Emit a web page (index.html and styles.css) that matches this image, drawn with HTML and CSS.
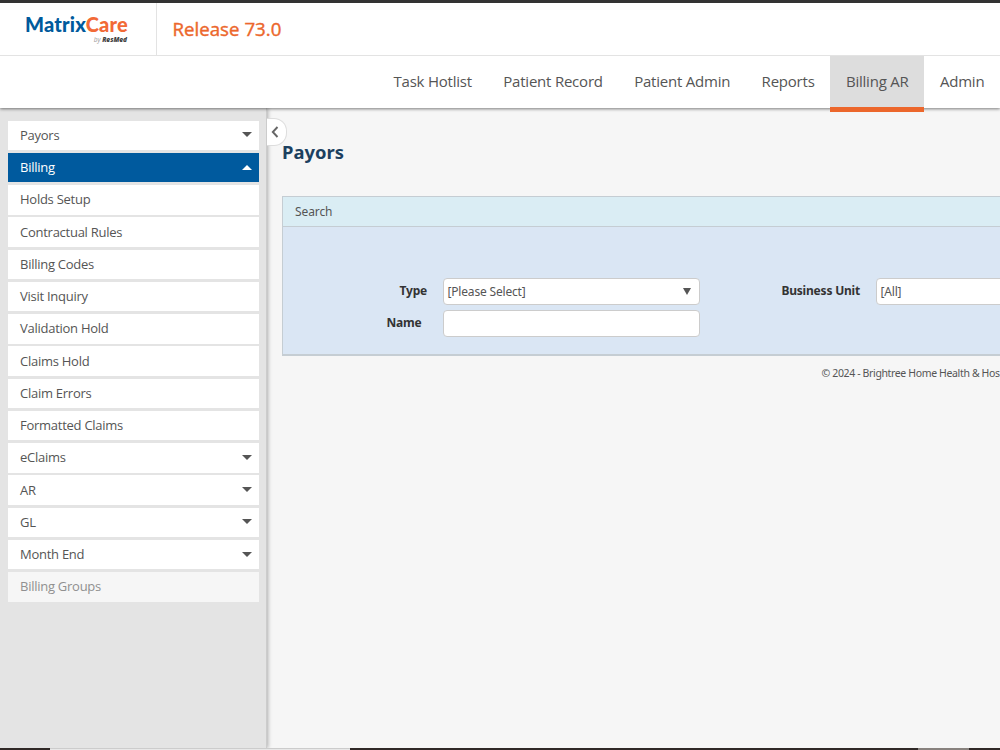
FILE: index.html
```html
<!DOCTYPE html>
<html lang="en">
<head>
    <meta charset="UTF-8">
    <meta name="viewport" content="width=device-width, initial-scale=1.0">
    <title>Payors</title>
    <link rel="stylesheet" href="styles.css">
</head>
<body>
    <header>
        <div class="brand-bar">
            <div class="logo">
                <div class="logo-name">Matrix<span>Care</span></div>
                <div class="logo-by">by <b>ResMed</b></div>
            </div>
            <div class="release"><span>Release 73.0</span></div>
        </div>
        <nav class="main-nav">
            <a>Task Hotlist</a>
            <a>Patient Record</a>
            <a>Patient Admin</a>
            <a>Reports</a>
            <a class="active">Billing AR</a>
            <a>Admin</a>
        </nav>
    </header>

    <div class="page">
        <aside class="sidebar">
            <ul>
                <li>Payors <i class="arrow"></i></li>
                <li class="open">Billing <i class="arrow up"></i></li>
                <li>Holds Setup</li>
                <li>Contractual Rules</li>
                <li>Billing Codes</li>
                <li>Visit Inquiry</li>
                <li>Validation Hold</li>
                <li>Claims Hold</li>
                <li>Claim Errors</li>
                <li>Formatted Claims</li>
                <li>eClaims <i class="arrow"></i></li>
                <li>AR <i class="arrow"></i></li>
                <li>GL <i class="arrow"></i></li>
                <li>Month End <i class="arrow"></i></li>
                <li class="disabled">Billing Groups</li>
            </ul>
            <div class="collapse">
                <svg width="8" height="12" viewBox="0 0 8 12"><path d="M6.5 1 L1.8 6 L6.5 11" fill="none" stroke="#666" stroke-width="1.9"/></svg>
            </div>
        </aside>

        <main>
            <h1>Payors</h1>
            <section class="search">
                <div class="search-title">Search</div>
                <div class="search-body">
                    <div class="label">Type</div>
                    <div class="field">[Please Select] <i class="select-arrow"></i></div>
                    <div class="label">Business Unit</div>
                    <div class="field">[All]</div>
                    <div class="label name">Name</div>
                    <div class="field"></div>
                </div>
            </section>
            <footer>© 2024 - Brightree Home Health &amp; Hos</footer>
        </main>
    </div>

    <div class="taskbar"><span></span><span class="light"></span><span></span><span class="mid"></span><span></span></div>
</body>
</html>
```

FILE: styles.css
```css
* { box-sizing: border-box; }
body { margin: 0; height: 750px; overflow: hidden; display: flex; flex-direction: column; font-family: "Open Sans", sans-serif; font-size: 13px; color: #555; background: #f6f6f6; }

header { position: relative; z-index: 2; height: 108px; flex: none; background: #fff; border-top: 3px solid #333; box-shadow: 0 1px 3px rgba(0, 0, 0, 0.5); }
.brand-bar { display: flex; height: 53px; border-bottom: 1px solid #e3e3e3; }
.logo { width: 157px; padding: 10px 0 0 25px; border-right: 1px solid #e3e3e3; white-space: nowrap; }
.logo-name { font: 900 20px/23px Lato, sans-serif; letter-spacing: 0.2px; color: #005a9c; }
.logo-name span { color: #f26a36; }
.logo-by { width: 102px; font-size: 6.5px; line-height: 7px; text-align: right; font-style: italic; color: #999; }
.logo-by b { font-weight: 800; color: #444; }
.release { padding-left: 15.5px; font-size: 18.7px; line-height: 52px; color: #ec672c; -webkit-text-stroke: 0.4px #ec672c; }
.main-nav { display: flex; justify-content: flex-end; height: 52px; }
.main-nav a { height: 52px; padding: 0 15.6px 0 15.8px; font-size: 15px; line-height: 51px; letter-spacing: -0.22px; white-space: nowrap; }
.main-nav .active { height: 56px; background: #ddd; border-bottom: 5px solid #ec672c; }

.page { display: flex; flex: 1; min-height: 0; }
.sidebar { position: relative; width: 267px; flex: none; padding: 12.5px 7px 0 7.5px; background: #e4e4e4; border-right: 1px solid #ccc; box-shadow: 1px 0 4px rgba(0, 0, 0, 0.3); }
.sidebar ul { display: grid; grid-auto-rows: 29.5px; gap: 2.75px; margin: 0; padding: 0; list-style: none; }
.sidebar li { display: flex; align-items: center; justify-content: space-between; padding: 0 7px 1px 12.5px; letter-spacing: -0.26px; background: #fff; }
.sidebar .open { background: #005a9e; color: #fff; }
.sidebar .disabled { background: #f6f6f6; color: #909090; }
.arrow { border: 5px solid transparent; border-top: 5px solid #555; border-bottom: 0; }
.arrow.up { border-top: 0; border-bottom: 5px solid #fff; }
.collapse { position: absolute; left: 267px; top: 10px; display: flex; align-items: center; width: 20px; height: 28px; padding-left: 4px; background: #fff; border: 1px solid #ddd; border-left: 0; border-radius: 0 13px 13px 0; }

main { flex: 1; min-width: 0; padding-left: 15px; overflow: hidden; font-family: "Noto Sans", sans-serif; }
h1 { margin: 31px 0; font: bold 18.4px/26px "Noto Sans", sans-serif; color: #1c405f; }
.search { width: 900px; height: 160px; background: #dae6f4; border: 1px solid #c5cdd3; border-bottom-width: 2px; }
.search-title { height: 30px; padding-left: 12px; line-height: 29px; font-size: 12px; letter-spacing: -0.1px; background: #daedf4; border-bottom: 1px solid #c5cdd3; }
.search-body { display: grid; grid-template-columns: 159.5px 257px 176px 257px; grid-auto-rows: 27px; row-gap: 5px; padding-top: 51px; }
.label { padding-right: 15.5px; text-align: right; font-size: 12px; font-weight: bold; line-height: 25px; letter-spacing: -0.2px; color: #333; }
.label.name { padding-right: 21px; }
.field { display: flex; align-items: center; justify-content: space-between; padding: 0 8px 0 4px; font-size: 12px; letter-spacing: -0.18px; background: #fff; border: 1px solid #ccc; border-radius: 4px; }
.select-arrow { border: 4px solid transparent; border-top: 7px solid #555; border-bottom: 0; }
footer { margin: 9px 0 0 539.5px; font-size: 10.5px; line-height: 17px; letter-spacing: -0.36px; white-space: nowrap; }

.taskbar { position: relative; z-index: 3; display: grid; grid-template-columns: 50px 300px 568px 51px 1fr; height: 2px; flex: none; }
.taskbar span { background: #302927; }
.taskbar .light { background: #e8e8e8; border-top: 1px solid #ccc; }
.taskbar .mid { background: #88827e; }
```
